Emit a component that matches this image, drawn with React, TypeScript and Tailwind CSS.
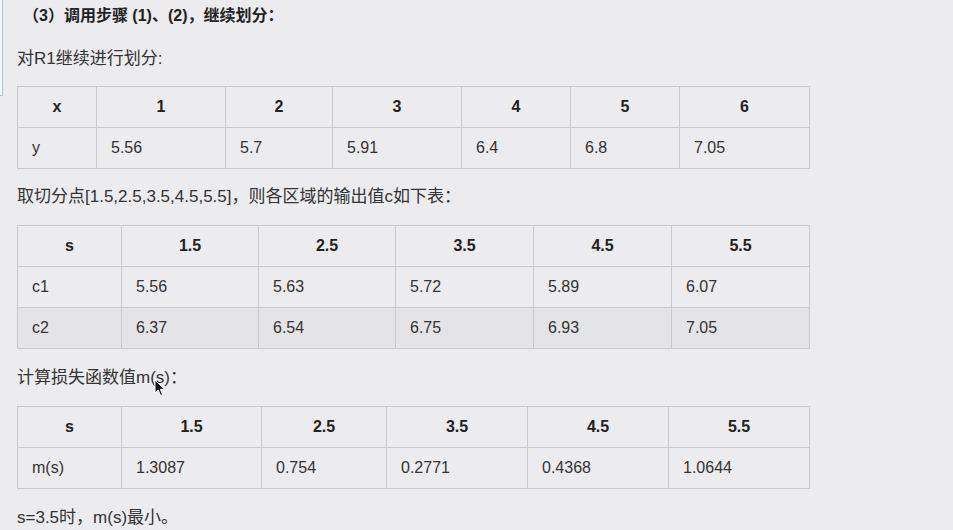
import React from "react";

type TableProps = {
  widths: number[];
  head: string[];
  rows: string[][];
  striped?: boolean;
};

function DataTable({ widths, head, rows, striped }: TableProps) {
  return (
    <table className="table-fixed border-collapse w-[792px] text-[16px] text-[#333]">
      <colgroup>
        {widths.map((w, i) => (
          <col key={i} style={{ width: w }} />
        ))}
      </colgroup>
      <thead>
        <tr>
          {head.map((h, i) => (
            <th key={i} className="h-[41px] border border-[#c9c8ca] font-bold text-center text-[#222] p-0">
              {h}
            </th>
          ))}
        </tr>
      </thead>
      <tbody>
        {rows.map((r, ri) => (
          <tr key={ri} className={striped && ri % 2 === 1 ? "bg-[#e4e3e5]" : ""}>
            {r.map((c, ci) => (
              <td key={ci} className="h-[41px] border border-[#c9c8ca] pl-[14px] py-0">
                {c}
              </td>
            ))}
          </tr>
        ))}
      </tbody>
    </table>
  );
}

export default function App() {
  return (
    <div
      className="relative w-[953px] h-[530px] overflow-hidden bg-[#ecebed] text-[#333] pl-[17px] pt-[4px]"
      style={{ fontFamily: '"Liberation Sans", "Noto Sans CJK SC", sans-serif' }}
    >
      {/* edge of a panel on the left */}
      <div className="absolute left-0 top-0 w-[3px] h-[96px] bg-[#f7f7f8] border-r border-b border-[#a9c5de]" />

      <p className="ml-[6px] leading-6 text-[16px] font-bold text-[#222]">（3）调用步骤 (1)、(2)，继续划分：</p>

      <p className="mt-[19px] leading-6 text-[17px]">对R1继续进行划分:</p>
      <div className="mt-[15px]">
        <DataTable
          widths={[79, 129, 107, 129, 109, 109, 130]}
          head={["x", "1", "2", "3", "4", "5", "6"]}
          rows={[["y", "5.56", "5.7", "5.91", "6.4", "6.8", "7.05"]]}
        />
      </div>

      <p className="mt-[16px] leading-6 text-[17px]">取切分点[1.5,2.5,3.5,4.5,5.5]，则各区域的输出值c如下表：</p>
      <div className="mt-[16px]">
        <DataTable
          striped
          widths={[104, 137, 137, 138, 138, 138]}
          head={["s", "1.5", "2.5", "3.5", "4.5", "5.5"]}
          rows={[
            ["c1", "5.56", "5.63", "5.72", "5.89", "6.07"],
            ["c2", "6.37", "6.54", "6.75", "6.93", "7.05"],
          ]}
        />
      </div>

      <p className="mt-[17px] leading-6 text-[17px]">计算损失函数值m(s)：</p>
      <div className="mt-[16px]">
        <DataTable
          widths={[104, 140, 125, 141, 141, 141]}
          head={["s", "1.5", "2.5", "3.5", "4.5", "5.5"]}
          rows={[["m(s)", "1.3087", "0.754", "0.2771", "0.4368", "1.0644"]]}
        />
      </div>

      <p className="mt-[17px] leading-6 text-[17px]">s=3.5时，m(s)最小。</p>

      {/* mouse pointer */}
      <svg className="absolute left-[154px] top-[379px]" width="12" height="18" viewBox="0 0 12 18">
        <path d="M1 1 L1 14 L4.2 11 L6.6 16.5 L8.6 15.6 L6.3 10.3 L10.5 10.3 Z" fill="#111" stroke="#fff" strokeWidth="1" strokeLinejoin="round" />
      </svg>
    </div>
  );
}
